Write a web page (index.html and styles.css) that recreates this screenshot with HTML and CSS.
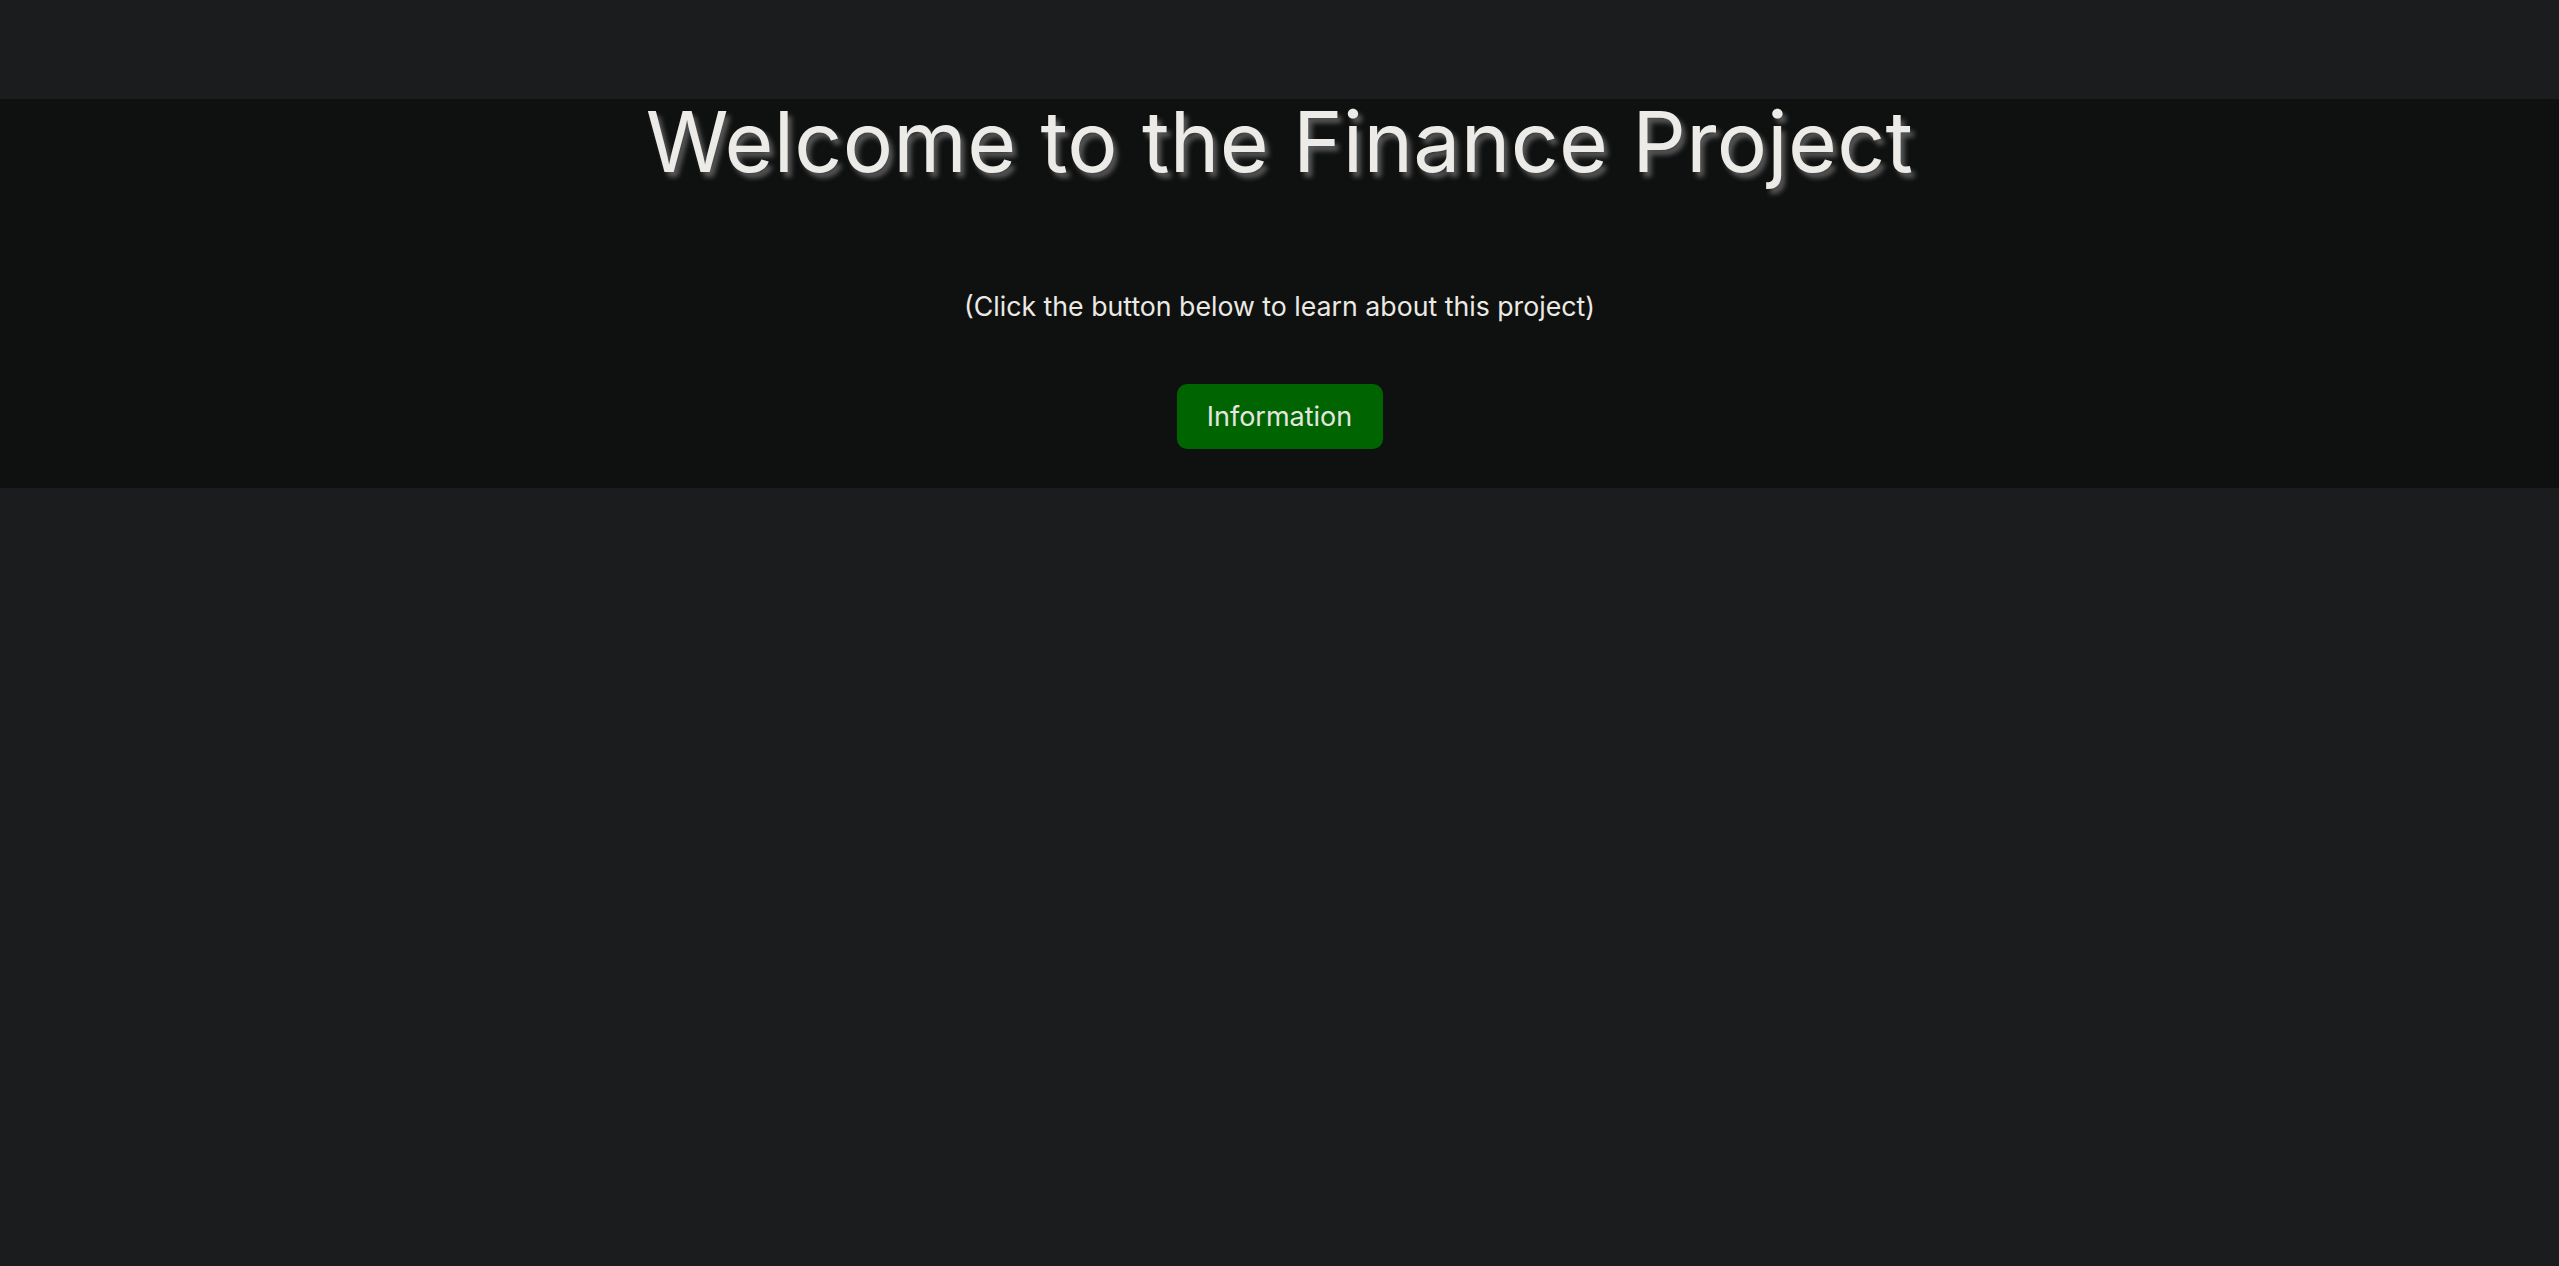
FILE: index.html
```html
<!DOCTYPE html>
<html lang="en">
<head>
<meta charset="utf-8">
<title>Finance Project</title>
<link rel="stylesheet" href="styles.css">
</head>
<body>
<main class="page">
  <section class="hero">
    <h1 class="hero-title">Welcome to the Finance Project</h1>
    <p class="hero-sub">(Click the button below to learn about this project)</p>
    <button class="hero-btn" type="button">Information</button>
  </section>
</main>
</body>
</html>
```

FILE: styles.css
```css
html, body {
  margin: 0;
  padding: 0;
}
body {
  background: #1b1c1e;
  min-height: 100vh;
  font-family: "Inter", "Noto Sans", sans-serif;
  color: #e8e6e3;
}
.page {
  padding-top: 99px;
}
.hero {
  background: #0f1110;
  height: 389px;
  box-sizing: border-box;
  display: flex;
  flex-direction: column;
  align-items: center;
}
.hero-title {
  margin: 0;
  font-weight: 400;
  font-size: 84px;
  line-height: 86px;
  color: #ecebe7;
  text-shadow: 4px 5px 5px #5a5a5a;
  letter-spacing: 0.3px;
}
.hero-sub {
  margin: 106px 0 0;
  font-size: 26.7px;
  line-height: 30px;
  color: #ece9e4;
}
.hero-btn {
  margin-top: 63px;
  width: 206px;
  height: 65px;
  border: none;
  border-radius: 10px;
  background: #006400;
  color: #e6e6e0;
  font-family: inherit;
  font-size: 27px;
}
```
